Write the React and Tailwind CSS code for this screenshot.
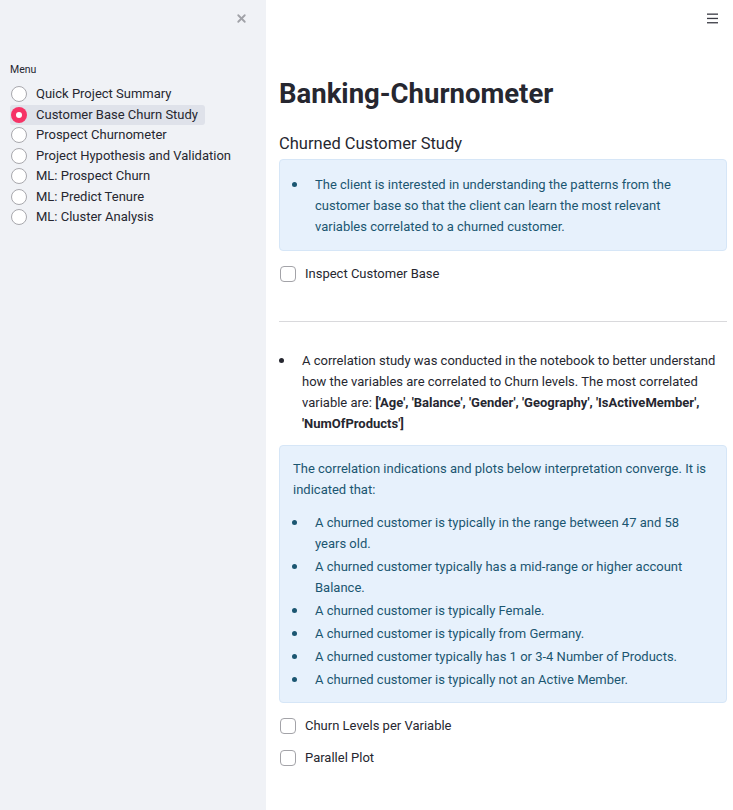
import { X } from 'lucide-react'

const menu = [
  'Quick Project Summary',
  'Customer Base Churn Study',
  'Prospect Churnometer',
  'Project Hypothesis and Validation',
  'ML: Prospect Churn',
  'ML: Predict Tenure',
  'ML: Cluster Analysis',
]

const findings = [
  'A churned customer is typically in the range between 47 and 58 years old.',
  'A churned customer typically has a mid-range or higher account Balance.',
  'A churned customer is typically Female.',
  'A churned customer is typically from Germany.',
  'A churned customer typically has 1 or 3-4 Number of Products.',
  'A churned customer is typically not an Active Member.',
]

function Radio({ label, selected }) {
  return (
    <div className="flex h-[20.5px] items-center">
      <div
        className={
          selected
            ? 'flex h-[20px] items-center rounded-[3px] bg-[#dfe2ea] pr-[7px] pl-[1px]'
            : 'flex h-[20px] items-center pl-[1px]'
        }
      >
        {selected ? (
          <span className="flex h-[16px] w-[16px] items-center justify-center rounded-full bg-[#f63366]">
            <span className="h-[6px] w-[6px] rounded-full bg-white" />
          </span>
        ) : (
          <span className="h-[16px] w-[16px] rounded-full border-[1.5px] border-[#a8a8ad] bg-white" />
        )}
        <span className="ml-[9px] text-[13px] text-[#262730]">{label}</span>
      </div>
    </div>
  )
}

function Checkbox({ label }) {
  return (
    <div className="flex h-[21px] items-center">
      <span className="ml-[1px] h-[16px] w-[16px] rounded-[4px] border border-[#a3a3a8] bg-white" />
      <span className="ml-[9px] text-[13px] text-[#262730]">{label}</span>
    </div>
  )
}

function Bullet({ children }) {
  return (
    <div className="flex">
      <span className="flex h-[21px] w-[23px] shrink-0 items-center">
        <span className="h-[5px] w-[5px] rounded-full bg-current" />
      </span>
      <span>{children}</span>
    </div>
  )
}

export default function App() {
  return (
    <div className="flex min-h-[810px] w-[733px] font-['Roboto',sans-serif] text-[#262730]">
      <aside className="w-[266px] shrink-0 bg-[#f0f2f6] px-[10px]">
        <div className="flex justify-end pt-[12px] pr-[8px]">
          <X size={13} strokeWidth={3.4} className="text-[#a0a2a8]" />
        </div>
        <div className="mt-[37px] text-[10.5px] text-[#262730]">Menu</div>
        <div className="mt-[6px]">
          {menu.map((m) => (
            <Radio key={m} label={m} selected={m === 'Customer Base Churn Study'} />
          ))}
        </div>
      </aside>

      <main className="flex-1 pr-[6px] pl-[13px]">
        <div className="flex justify-end pt-[13px] pr-[9px]">
          <svg width="11" height="11" viewBox="0 0 11 11">
            <rect x="0" y="0.5" width="11" height="1.3" fill="#3a3b44" />
            <rect x="0" y="4.8" width="11" height="1.3" fill="#3a3b44" />
            <rect x="0" y="9.1" width="11" height="1.3" fill="#3a3b44" />
          </svg>
        </div>

        <h1 className="mt-[52px] text-[27.5px] leading-[36px] font-bold">Banking-Churnometer</h1>
        <h3 className="mt-[20px] text-[16.5px] leading-[24px]">Churned Customer Study</h3>

        <div className="mt-[3px] rounded-[4px] border border-[#d6e6f7] bg-[#e7f1fc] pt-[14px] pr-[14px] pb-[13px] pl-[12px] text-[13px] leading-[21px] text-[#1b5671]">
          <Bullet>
            The client is interested in understanding the patterns from the customer base so that the client can learn the most relevant variables correlated to a churned customer.
          </Bullet>
        </div>

        <div className="mt-[12px]">
          <Checkbox label="Inspect Customer Base" />
        </div>

        <hr className="mt-[37px] border-0 border-t border-[#d9d9dc]" />

        <div className="mt-[28px] text-[13px] leading-[21px]">
          <Bullet>
            A correlation study was conducted in the notebook to better understand how the variables are correlated to Churn levels. The most correlated variable are:{' '}
            <b>['Age', 'Balance', 'Gender', 'Geography', 'IsActiveMember', 'NumOfProducts']</b>
          </Bullet>
        </div>

        <div className="mt-[11px] rounded-[4px] border border-[#d6e6f7] bg-[#e7f1fc] pt-[12px] pr-[14px] pb-[12px] pl-[13px] text-[13px] leading-[21px] text-[#1b5671]">
          <p>The correlation indications and plots below interpretation converge. It is indicated that:</p>
          <div className="mt-[12px] -ml-[1px] flex flex-col gap-[2px]">
            {findings.map((f) => (
              <Bullet key={f}>{f}</Bullet>
            ))}
          </div>
        </div>

        <div className="mt-[12px] flex flex-col gap-[11px]">
          <Checkbox label="Churn Levels per Variable" />
          <Checkbox label="Parallel Plot" />
        </div>
      </main>
    </div>
  )
}
